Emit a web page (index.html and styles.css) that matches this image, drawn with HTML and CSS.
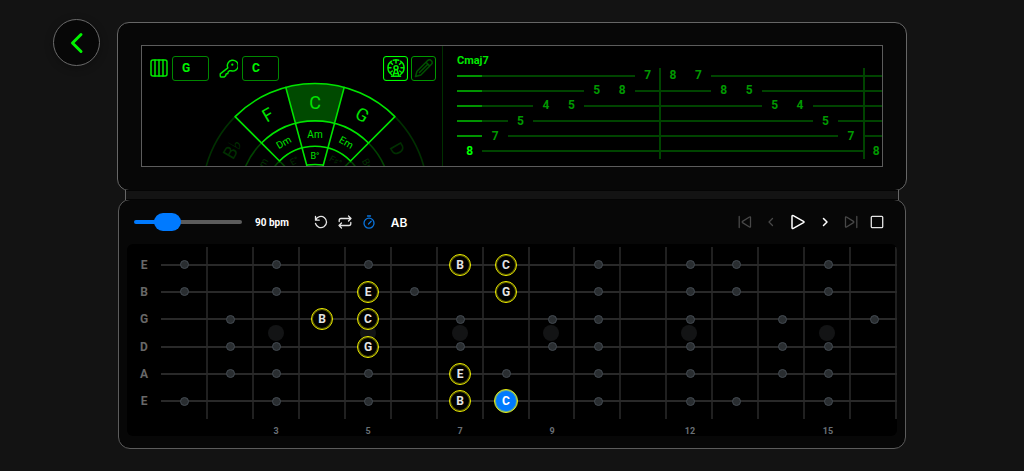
FILE: index.html
```html
<!DOCTYPE html>
<html lang="en">
<head>
<meta charset="utf-8">
<meta name="viewport" content="width=device-width, initial-scale=1">
<title>Arpeggio trainer</title>
<link rel="stylesheet" href="styles.css">
</head>
<body>
<div class="app">
  <button class="back" type="button" aria-label="Back">
    <svg width="22" height="22" viewBox="0 0 22 22"><path d="M15 2.500 6.500 11l8.500 8.500"/></svg>
  </button>

  <main class="device">
    <section class="lid">
      <div class="screen">
        <div class="harmony">
          <div class="picker">
            <label class="picker-icon" for="position" aria-label="Position">
              <svg width="18" height="18" viewBox="0 0 18 18"><rect x="1" y="1" width="16" height="16" rx="2"/><path d="M5 1v16M9 1v16M13 1v16"/></svg>
            </label>
            <select id="position" class="select"><option>G</option><option>C</option><option>A</option></select>
            <label class="picker-icon" for="key" aria-label="Key">
              <svg width="19" height="19" viewBox="0 0 20 20"><path d="M9.300 9.300A5.700 5.700 0 1 1 12.800 12.400L11 12.300 9.600 13.700 9.300 15.300 7.500 15.800 7 17.600 5.500 19H2.200Q1.300 19 1.300 18V15.700Z"/><circle class="dot" cx="14" cy="6" r="1.200"/></svg>
            </label>
            <select id="key" class="select"><option>C</option><option>G</option><option>F</option></select>
            <div class="views">
              <button class="view view-on" type="button" aria-label="Chord wheel">
                <svg width="20" height="20" viewBox="0 0 20 20"><path d="M5.500 16.500A8 8 0 0 1 5.500 3.200M7.300 2.300A8 8 0 0 1 12.700 2.300M14.500 3.200A8 8 0 0 1 14.500 16.500M10 2v3M2 9.800h3M15 9.800h3M4.300 4.200l2.200 2.100M15.700 4.200l-2.200 2.100M4.300 14.500l2-1.500M15.700 14.500l-2-1.500M9 11.500 7 18M11 11.500 13 18M5.500 18.300h9M8.300 15.500h3.400"/><circle cx="10" cy="9.800" r="2"/></svg>
              </button>
              <button class="view" type="button" aria-label="Edit">
                <svg width="20" height="20" viewBox="0 0 20 20"><path d="M1.500 18.500 3 13.200 13.700 2.500Q15 1.200 16.500 2L18 3.500Q18.800 5 17.500 6.300L6.800 17ZM12 4.200l3.800 3.800M5.500 14.500 13.800 6.200"/></svg>
              </button>
            </div>
          </div>
          <svg class="wheel" viewBox="-115 -114.5 230 84" role="img" aria-label="Chord wheel">
            <g class="faint">
              <path d="M-109.100-29.200A113 113 0 0 1-79.900-79.900M109.100-29.200A113 113 0 0 0 79.900-79.900"/>
              <path class="inner" d="M-73.100-19.600A75.700 75.700 0 0 1-53.500-53.500M73.100-19.600A75.700 75.700 0 0 0 53.500-53.500M-48.500-13A50.200 50.200 0 0 1-13-48.500M48.500-13A50.200 50.200 0 0 0 13-48.500M-35.500-35.500l13.500 13.500M35.500-35.500l-13.500 13.500"/>
            </g>
            <path class="lit" d="M-29.200-109.100A113 113 0 0 1 29.200-109.100L19.600-73.100A75.700 75.700 0 0 0-19.600-73.100Z"/>
            <g class="bright">
              <path d="M-79.900-79.900A113 113 0 0 1 79.900-79.900L35.500-35.500A50.200 50.200 0 0 0-35.500-35.500Z"/>
              <path d="M-53.500-53.500A75.700 75.700 0 0 1 53.500-53.500M-29.200-109.100-8-30.200M29.200-109.100 8-30.200M-8-31.500Q0-32.500 8-31.500"/>
            </g>
            <g class="major">
              <text transform="rotate(-30) translate(0 -94)" dy="6">F</text>
              <text transform="translate(0 -94)" dy="6">C</text>
              <text transform="rotate(30) translate(0 -94)" dy="6">G</text>
              <text class="dim" transform="rotate(-60) translate(0 -95)" dy="6">B♭</text>
              <text class="dim" transform="rotate(60) translate(0 -95)" dy="6">D</text>
            </g>
            <g class="minor">
              <text transform="rotate(-30) translate(0 -63)" dy="4">Dm</text>
              <text transform="translate(0 -63)" dy="4">Am</text>
              <text transform="rotate(30) translate(0 -63)" dy="4">Em</text>
              <text class="dim" transform="rotate(-60) translate(0 -62)" dy="4">Gm</text>
              <text class="dim" transform="rotate(60) translate(0 -62)" dy="4">Bm</text>
            </g>
            <g class="dimin">
              <text transform="translate(0 -41)" dy="3">B°</text>
              <text class="dim" transform="rotate(-30) translate(0 -41)" dy="3">E°</text>
              <text class="dim" transform="rotate(30) translate(0 -41)" dy="3">F♯°</text>
            </g>
          </svg>
        </div>
        <div class="tab">
          <h1 class="chord">Cmaj7</h1>
          <div class="staff" id="staff"></div>
        </div>
      </div>
    </section>

    <div class="hinge"></div>

    <section class="base">
      <div class="controls">
        <input class="tempo" id="tempo" type="range" min="40" max="240" value="90">
        <label class="bpm" for="tempo">90 bpm</label>
        <div class="tools">
          <button type="button" class="tool" aria-label="Restart"><svg width="14" height="14" viewBox="0 0 14 14"><path d="M1.500 1.500v3.700h3.700M1.700 5A5.600 5.600 0 1 1 1.500 8.500"/></svg></button>
          <button type="button" class="tool" aria-label="Repeat"><svg width="14" height="14" viewBox="0 0 14 14"><path d="M10.500 1 13 3.500 10.500 6M13 3.500H3Q1.200 3.500 1.200 5.500V6.500M3.500 8 1 10.500 3.500 13M1 10.500h10Q12.800 10.500 12.800 8.500V7.500"/></svg></button>
          <button type="button" class="tool tool-on" aria-label="Metronome"><svg width="14" height="14" viewBox="0 0 14 14"><circle cx="7" cy="8.200" r="5"/><path d="M5.500 1h3M6.500 9 9.200 6.200"/></svg></button>
          <button type="button" class="tool ab">AB</button>
        </div>
        <div class="transport">
          <button type="button" class="step off" aria-label="First"><svg width="14" height="14" viewBox="0 0 14 14"><path d="M1.200 1.500v11M12.500 2.500v9q0 1-1 .5L4.500 7.600q-.8-.6 0-1.200L11.500 2q1-.5 1 .5Z"/></svg></button>
          <button type="button" class="step off" aria-label="Previous"><svg width="14" height="14" viewBox="0 0 14 14"><path d="M8.500 3.500 5 7l3.500 3.500"/></svg></button>
          <button type="button" class="step play" aria-label="Play"><svg width="16" height="16" viewBox="0 0 16 16"><path d="M2 2.500v11q0 1.500 1.300 .8L13.500 8.700q1-.7 0-1.400L3.300 1.700Q2 1 2 2.500Z"/></svg></button>
          <button type="button" class="step next" aria-label="Next"><svg width="14" height="14" viewBox="0 0 14 14"><path d="M5.500 3.500 9 7l-3.500 3.500"/></svg></button>
          <button type="button" class="step off" aria-label="Last"><svg width="14" height="14" viewBox="0 0 14 14"><path d="M12.800 1.500v11M1.500 2.500v9q0 1 1 .5L9.500 7.600q.8-.6 0-1.200L2.500 2q-1-.5-1 .5Z"/></svg></button>
          <button type="button" class="step" aria-label="Stop"><svg width="14" height="14" viewBox="0 0 14 14"><rect x="1.300" y="1.300" width="11.400" height="11.400" rx="1"/></svg></button>
        </div>
      </div>

      <div class="board">
        <div class="names" id="names"></div>
        <div class="neck">
          <div class="frets" id="frets"></div>
          <div class="strings" id="strings"></div>
        </div>
        <div class="numbers" id="numbers"></div>
      </div>
    </section>
  </main>
</div>
<script src="app.js"></script>
</body>
</html>
```

FILE: styles.css
```css
* { box-sizing: border-box; }

body {
  margin: 0;
  min-height: 100vh;
  background: #131313;
  color: #fff;
  font-family: Roboto, "DejaVu Sans", sans-serif;
}

button {
  padding: 0;
  border: 0;
  background: none;
  color: inherit;
  font: inherit;
  cursor: pointer;
}

svg {
  display: block;
  fill: none;
  stroke: currentColor;
  stroke-linecap: round;
  stroke-linejoin: round;
}

.app {
  display: grid;
  grid-template-columns: 117px minmax(0, 1fr) 117px;
  align-items: start;
  padding: 22px 0;
}

.back {
  display: flex;
  align-items: center;
  justify-content: center;
  justify-self: end;
  width: 47px;
  height: 47px;
  margin: -3px 17px 0 0;
  border: 1px solid #6a6a6a;
  border-radius: 50%;
  background: #070707;
  color: #00f500;
  box-shadow: 0 2px 8px rgba(0, 0, 0, 0.3);
}
.back svg { stroke-width: 3; }

/* upper half */
.lid {
  padding: 22px 23px 23px;
  border: 1px solid #666;
  border-radius: 12px;
  background: #070707;
}

.screen {
  display: grid;
  grid-template-columns: 301px minmax(0, 1fr);
  overflow: hidden;
  border: 1px solid #5c5c5c;
  background: #000;
}

.harmony { border-right: 1px solid #003000; }

.picker {
  display: flex;
  align-items: center;
  height: 36px;
  padding: 8px 6px 0 8px;
  color: #00e800;
}
.picker svg { stroke-width: 1.5; }
.picker .dot { fill: currentColor; stroke: none; }

.select {
  appearance: none;
  width: 37px;
  height: 25px;
  margin: 0 10px 0 4px;
  padding: 0 9px;
  border: 1px solid #008800;
  border-radius: 3px;
  background: #000;
  color: #00f500;
  font: 700 12px Roboto, "Liberation Sans", sans-serif;
}

.views {
  display: flex;
  gap: 3px;
  margin-left: auto;
}
.view {
  display: flex;
  align-items: center;
  justify-content: center;
  width: 25px;
  height: 25px;
  border: 1px solid #009800;
  border-radius: 3px;
  color: #005000;
}
.view-on {
  border-color: #00ff00;
  box-shadow: inset 0 0 1px #00c000;
  color: #00f000;
}

.wheel {
  width: 230px;
  height: 84px;
  margin-left: 58px;
  stroke: none;
}
.wheel path { stroke-width: 1.6; }
.wheel .faint { stroke: #003000; }
.wheel .inner { stroke: #004400; }
.wheel .bright { stroke: #00e400; }
.wheel .lit { fill: #004a00; }
.wheel text { fill: #00e400; text-anchor: middle; }
.wheel .dim { fill: #003000; }
.major { font-size: 18px; }
.minor { font-size: 10px; }
.dimin { font-size: 9px; }

.tab { padding: 8px 0 0 14px; }

.chord {
  margin: 0;
  color: #00e800;
  font-size: 11px;
  line-height: 14px;
}

.staff {
  display: grid;
  grid-template: repeat(6, 1fr) / repeat(17, 1fr);
  height: 91px;
  margin-right: -7px;
}
.beat {
  display: flex;
  align-items: center;
  justify-content: center;
  color: #009800;
  font-size: 12px;
  font-weight: 700;
  line-height: 15px;
}
.beat:empty::before {
  content: "";
  flex: 1;
  height: 2px;
  background: #004400;
}
.beat.now { color: #00ff00; }
.beat.now:empty::before { background: #009400; }
.bar {
  grid-row: 1 / -1;
  width: 2px;
  margin-left: -1px;
  background: #004400;
}

/* joint between the halves */
.hinge {
  position: relative;
  height: 10px;
  margin: -1px 9px;
  border: solid #040404;
  border-width: 1px 0;
  background: #131313;
  box-shadow: -1px 0 #666, 1px 0 #666;
}

/* lower half */
.base {
  margin: 0 1px;
  padding: 0 8px 12px;
  border: 1px solid #5c5c5c;
  border-radius: 12px;
  background: #070707;
}

.controls {
  display: flex;
  align-items: center;
  height: 44px;
  padding: 0 7px;
}

.tempo {
  appearance: none;
  width: 108px;
  height: 18px;
  margin: 0 13px 0 0;
  background: none;
}
.tempo::-webkit-slider-runnable-track {
  height: 4px;
  border-radius: 2px;
  background: linear-gradient(to right, #007aff 30%, #5c5c5c 30%);
}
.tempo::-webkit-slider-thumb {
  appearance: none;
  width: 27px;
  height: 18px;
  margin-top: -7px;
  border-radius: 9px;
  background: #007aff;
}

.bpm {
  width: 54px;
  font-size: 10px;
  font-weight: 700;
}

.tools, .transport {
  display: flex;
  align-items: center;
}
.tool, .step {
  display: flex;
  align-items: center;
  justify-content: center;
  width: 24px;
  height: 24px;
  color: #e4e4e4;
}
.tool svg, .step svg { stroke-width: 1.3; }
.tool-on { color: #0a74dc; }
.ab {
  width: 36px;
  color: #fff;
  font: 600 12px Inter, sans-serif;
}
.transport { margin-left: auto; }
.step { width: 26px; }
.off { color: #484848; }
.play { width: 28px; color: #fff; }
.next { color: #fff; }
.play svg, .next svg { stroke-width: 1.5; }

.board {
  display: grid;
  grid-template-columns: 34px minmax(0, 1fr);
  padding-top: 3px;
  overflow: hidden;
  border-radius: 6px;
  background: #000;
}

.names, .strings {
  display: grid;
  grid-template-rows: repeat(6, 1fr);
  height: 172px;
  padding: 4px 0;
}
.names {
  align-items: center;
  justify-items: center;
  color: #686868;
  font-size: 12px;
  font-weight: 700;
}

.neck { position: relative; }
.frets {
  position: absolute;
  inset: 0 0 0 1px;
  display: grid;
  grid-template-columns: repeat(16, 1fr);
}
.fret {
  display: flex;
  align-items: center;
  justify-content: center;
  border-right: 2px solid #202020;
}
.inlay {
  width: 16px;
  height: 16px;
  border-radius: 50%;
  background: #131415;
}

.strings { position: relative; }
.string {
  display: grid;
  grid-template-columns: repeat(16, 1fr);
  place-items: center;
  background: linear-gradient(#292929, #292929) center / 100% 2px no-repeat;
}
.tone {
  width: 9px;
  height: 9px;
  border: 1px solid #434a51;
  border-radius: 50%;
  background: #292d30;
}
.note {
  display: flex;
  align-items: center;
  justify-content: center;
  width: 22px;
  height: 22px;
  border: 1px solid #f0f000;
  border-radius: 50%;
  background: #000;
  box-shadow: inset 0 0 0 1px rgba(240, 240, 0, 0.4);
  color: #e4e4e4;
  font-size: 12px;
  font-weight: 700;
}
.note.now {
  width: 24px;
  height: 24px;
  background: #007aff;
  color: #fff;
}

.numbers {
  grid-column: 2;
  display: grid;
  grid-template-columns: repeat(16, 1fr);
  height: 17px;
  padding-top: 6px;
  color: #6a7076;
  font-size: 9px;
  font-weight: 700;
  line-height: 12px;
  text-align: center;
}
```

FILE: app.js
```javascript
const FRETS = 16;
const INLAYS = [3, 5, 7, 9, 12, 15];

const STRINGS = [
  { name: "E", tones: [1, 3, 5, 10, 12, 13, 15], notes: { 7: "B", 8: "C" } },
  { name: "B", tones: [1, 3, 6, 10, 12, 13, 15], notes: { 5: "E", 8: "G" } },
  { name: "G", tones: [2, 7, 9, 10, 12, 14, 16], notes: { 4: "B", 5: "C" } },
  { name: "D", tones: [2, 3, 7, 9, 10, 12, 14, 15], notes: { 5: "G" } },
  { name: "A", tones: [2, 3, 5, 8, 10, 12, 14, 15], notes: { 7: "E" } },
  { name: "E", tones: [1, 3, 5, 10, 12, 13, 15], notes: { 7: "B", 8: "C" }, now: 8 }
];

// One entry per beat: [string row, fret]
const BEATS = [
  [5, 8], [4, 7], [3, 5], [2, 4], [2, 5], [1, 5], [1, 8], [0, 7],
  [0, 8], [0, 7], [1, 8], [1, 5], [2, 5], [2, 4], [3, 5], [4, 7], [5, 8]
];

function add(parent, className, text) {
  const el = document.createElement("div");
  el.className = className;
  if (text !== undefined) el.textContent = text;
  parent.append(el);
  return el;
}

const byId = (id) => document.getElementById(id);

BEATS.forEach(([row, fret], beat) => {
  for (let r = 0; r < 6; r++) {
    const cell = add(byId("staff"), beat === 0 ? "beat now" : "beat", r === row ? fret : undefined);
    cell.style.gridArea = `${r + 1} / ${beat + 1}`;
  }
  if (beat && beat % 8 === 0) {
    add(byId("staff"), "bar").style.gridColumn = beat + 1;
  }
});

for (let f = 1; f <= FRETS; f++) {
  const fret = add(byId("frets"), "fret");
  const marked = INLAYS.includes(f);
  if (marked) add(fret, "inlay");
  add(byId("numbers"), "number", marked ? f : "");
}

STRINGS.forEach((string) => {
  add(byId("names"), "name", string.name);
  const row = add(byId("strings"), "string");
  for (let f = 1; f <= FRETS; f++) {
    let mark;
    if (string.notes[f]) mark = add(row, string.now === f ? "note now" : "note", string.notes[f]);
    else if (string.tones.includes(f)) mark = add(row, "tone");
    if (mark) mark.style.gridArea = `1 / ${f}`;
  }
});
```
